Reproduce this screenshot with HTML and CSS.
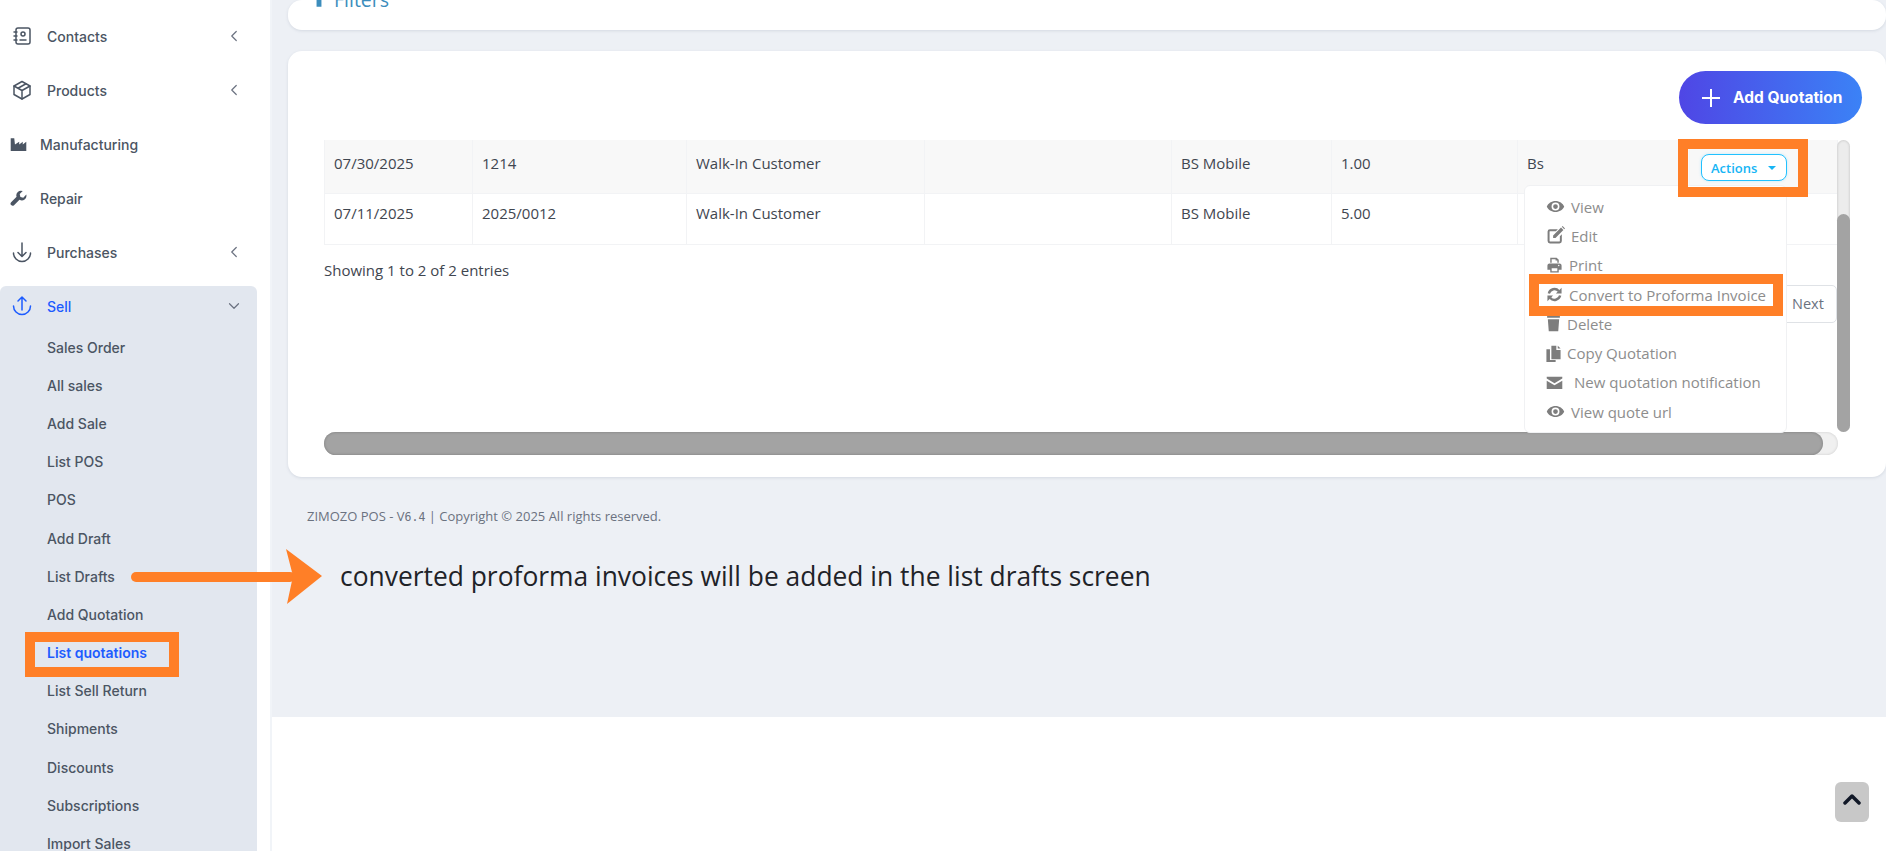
FILE: index.html
```html
<!DOCTYPE html>
<html lang="en">
<head>
<meta charset="utf-8">
<title>List quotations</title>
<link rel="stylesheet" href="styles.css">
</head>
<body>
<div class="app">
  <aside class="sidebar">
    <a class="nav-link">
      <svg class="nav-icon" viewBox="0 0 24 24"><path d="M20 6v12a2 2 0 0 1-2 2H8a2 2 0 0 1-2-2V6a2 2 0 0 1 2-2h10a2 2 0 0 1 2 2z"/><path d="M10 16h6"/><circle cx="13" cy="10" r="2"/><path d="M4 8h3M4 12h3M4 16h3"/></svg>
      <span class="nav-text">Contacts</span>
      <svg class="chev" viewBox="0 0 24 24"><path d="M15 6l-6 6 6 6"/></svg>
    </a>
    <a class="nav-link">
      <svg class="nav-icon" viewBox="0 0 24 24"><path d="M12 3.500l8 4.500v8.500l-8 4.500-8-4.500V8z"/><path d="M12 12.500L20 8M12 12.500V21M12 12.500L4 8M16 5.750l-8 4.500"/></svg>
      <span class="nav-text">Products</span>
      <svg class="chev" viewBox="0 0 24 24"><path d="M15 6l-6 6 6 6"/></svg>
    </a>
    <a class="nav-link nav-link-fa">
      <svg class="fa-icon" viewBox="0 0 24 20"><path d="M1 1h5l1 9 6-4v4l5-4v4l5-4v13H1z"/></svg>
      <span class="nav-text">Manufacturing</span>
    </a>
    <a class="nav-link nav-link-fa">
      <svg class="fa-icon" viewBox="0 0 24 24"><path d="M23 6.500l-4.300 4.300-4-1-1-4L18 1.500a6.500 6.500 0 0 0-8.700 8.100L1.600 17.300a2.900 2.900 0 0 0 4.100 4.100l7.700-7.700A6.500 6.500 0 0 0 23 6.500z"/></svg>
      <span class="nav-text">Repair</span>
    </a>
    <a class="nav-link">
      <svg class="nav-icon" viewBox="0 0 24 24"><path d="M12 3v13M8 12.500l4 4 4-4"/><path d="M3.500 13a8.500 8.500 0 0 0 17 0"/></svg>
      <span class="nav-text">Purchases</span>
      <svg class="chev" viewBox="0 0 24 24"><path d="M15 6l-6 6 6 6"/></svg>
    </a>
    <div class="nav-group">
      <a class="nav-head">
        <svg class="nav-icon" viewBox="0 0 24 24"><path d="M12 16V3M8 7l4-4 4 4"/><path d="M3.500 12a8.500 8.500 0 0 0 17 0"/></svg>
        <span class="nav-text">Sell</span>
        <svg class="chev" viewBox="0 0 24 24"><path d="M6 9l6 6 6-6"/></svg>
      </a>
      <a class="sub-link">Sales Order</a>
      <a class="sub-link">All sales</a>
      <a class="sub-link">Add Sale</a>
      <a class="sub-link">List POS</a>
      <a class="sub-link">POS</a>
      <a class="sub-link">Add Draft</a>
      <a class="sub-link">List Drafts</a>
      <a class="sub-link">Add Quotation</a>
      <a class="sub-link sub-active">List quotations</a>
      <a class="sub-link">List Sell Return</a>
      <a class="sub-link">Shipments</a>
      <a class="sub-link">Discounts</a>
      <a class="sub-link">Subscriptions</a>
      <a class="sub-link">Import Sales</a>
    </div>
  </aside>

  <div class="content-col">
    <main class="main">
      <section class="card filter-card">
        <a class="filter-link">
          <svg class="filter-icon" viewBox="0 0 18 18"><path d="M1 1h16l-6 7v9H7V8z"/></svg>
          <span>Filters</span>
        </a>
      </section>
      <section class="card list-card">
        <div class="card-tools">
          <a class="add-btn">
            <svg class="plus" viewBox="0 0 18 18"><path d="M9 0v18M0 9h18"/></svg>
            <span>Add Quotation</span>
          </a>
        </div>
        <div class="table-shell">
          <div class="table-body">
            <table class="data-table">
              <colgroup>
                <col class="c1"><col class="c2"><col class="c3"><col class="c4"><col class="c5"><col class="c6"><col class="c7"><col class="c8">
              </colgroup>
              <tr class="row-odd">
                <td>07/30/2025</td><td>1214</td><td>Walk-In Customer</td><td></td><td>BS Mobile</td><td>1.00</td><td>Bs</td>
                <td class="action-cell"><button class="actions-btn">Actions<span class="caret"></span></button></td>
              </tr>
              <tr class="row-even">
                <td>07/11/2025</td><td>2025/0012</td><td>Walk-In Customer</td><td></td><td>BS Mobile</td><td>5.00</td><td></td><td></td>
              </tr>
            </table>
            <div class="table-foot">
              <span class="info">Showing 1 to 2 of 2 entries</span>
              <a class="page-next">Next</a>
            </div>
          </div>
          <div class="vscroll"><div class="vthumb"></div></div>
        </div>
        <div class="hscroll"><div class="hthumb"></div></div>

        <ul class="dropdown">
          <li class="dd-item"><svg class="dd-icon i-wide" viewBox="0 0 24 24"><path d="M12 5C7 5 2.700 8 1 12c1.700 4 6 7 11 7s9.300-3 11-7c-1.700-4-6-7-11-7zm0 12a5 5 0 1 1 0-10 5 5 0 0 1 0 10zm0-8a3 3 0 1 0 0 6 3 3 0 0 0 0-6z"/></svg>View</li>
          <li class="dd-item"><svg class="dd-icon i-wide" viewBox="0 0 24 24"><path d="M5 4h10l-2.500 2.500H5a.5.5 0 0 0-.5.5v12a.5.5 0 0 0 .5.5h12a.5.5 0 0 0 .5-.5v-6L20 10.500V19a3 3 0 0 1-3 3H5a3 3 0 0 1-3-3V7a3 3 0 0 1 3-3z"/><path d="M9 12L19 2l3 3-10 10H9zM20 1l1-1 3 3-1 1z"/></svg>Edit</li>
          <li class="dd-item"><svg class="dd-icon i-mid" viewBox="0 0 24 24"><path d="M6 1h9l3 3v4h-2V5h-2.500V3H8v5H6zM5 9h14a3 3 0 0 1 3 3v6h-4v4H6v-4H2v-6a3 3 0 0 1 3-3zm3 7v4h8v-4zm10-5a1 1 0 1 0 0 2 1 1 0 0 0 0-2z"/></svg>Print</li>
          <li class="dd-item"><svg class="dd-icon i-mid" viewBox="0 0 24 24"><path class="arc" d="M4 10.500A8.200 8.200 0 0 1 18 7"/><path d="M22 2.500v8h-8z"/><path class="arc" d="M20 13.500A8.200 8.200 0 0 1 6 17"/><path d="M2 21.500v-8h8z"/></svg>Convert to Proforma Invoice</li>
          <li class="dd-item"><svg class="dd-icon i-thin" viewBox="0 0 20 24"><path d="M1 1h18v3H1zM2 6h16l-1.300 17H3.300z"/></svg>Delete</li>
          <li class="dd-item"><svg class="dd-icon i-thin" viewBox="0 0 20 24"><path d="M0 6h5v15h8v3H0zM7 1h7v6h6v13H7zM16 1l4 4h-4z"/></svg>Copy Quotation</li>
          <li class="dd-item dd-item-wide"><svg class="dd-icon i-mid" viewBox="0 0 24 20"><path d="M1 2h22v2.500L12 11 1 4.500zM1 7.500L12 14l11-6.500V19H1z"/></svg>New quotation notification</li>
          <li class="dd-item"><svg class="dd-icon i-wide" viewBox="0 0 24 24"><path d="M12 5C7 5 2.700 8 1 12c1.700 4 6 7 11 7s9.300-3 11-7c-1.700-4-6-7-11-7zm0 12a5 5 0 1 1 0-10 5 5 0 0 1 0 10zm0-8a3 3 0 1 0 0 6 3 3 0 0 0 0-6z"/></svg>View quote url</li>
        </ul>
      </section>
      <footer class="page-footer">ZIMOZO POS - V<span class="mono">6.4</span> | Copyright © 2025 All rights reserved.</footer>
    </main>
  </div>
</div>

<a class="to-top"><svg viewBox="0 0 18 12"><path d="M2 10l7-7 7 7"/></svg></a>

<div class="mark mark-actions"></div>
<div class="mark mark-convert"></div>
<div class="mark mark-list"></div>
<div class="arrow-line"></div>
<svg class="arrow-head" viewBox="0 0 36 56"><path d="M0 0L36 27 1 55 7 27z"/></svg>
<div class="note">converted proforma invoices will be added in the list drafts screen</div>
</body>
</html>
```

FILE: styles.css
```css
* { box-sizing: border-box; }
html, body { margin: 0; height: 851px; overflow: hidden; background: #fff; }
body { position: relative; font-family: "Open Sans", "Noto Sans", sans-serif; color: #374151; }
a { text-decoration: none; }

.app { display: flex; height: 851px; }

.sidebar {
  width: 270px;
  flex: none;
  padding: 9px 13px 0 0;
  background: #fff;
  font-family: Inter, "Noto Sans", sans-serif;
  font-size: 14px;
  font-weight: 500;
  color: #4b5563;
  overflow: hidden;
}
.nav-link { display: flex; align-items: center; height: 54px; padding-left: 10px; }
.nav-icon { width: 24px; height: 24px; flex: none; margin-right: 13px; fill: none; stroke: #4b5563; stroke-width: 1.500; stroke-linecap: round; stroke-linejoin: round; }
.fa-icon { width: 17px; height: 17px; flex: none; margin-right: 13px; fill: #4b5563; }
.nav-text { flex: 1; }
.chev { width: 18px; height: 18px; flex: none; margin-right: 14px; fill: none; stroke: #6b7280; stroke-width: 1.6; stroke-linecap: round; stroke-linejoin: round; }
.nav-group { margin-top: 7px; height: 700px; background: #e2e7ef; border-radius: 6px 6px 0 0; }
.nav-head { display: flex; align-items: center; height: 40px; margin-bottom: 2px; padding-left: 10px; color: #1d5cff; }
.nav-head .nav-icon { stroke: #1d5cff; }
.sub-link { display: flex; align-items: center; height: 38.2px; padding-left: 47px; }
.sub-active { color: #1d5cff; font-weight: 600; }

.content-col { flex: 1; min-width: 0; border-left: 2px solid #f1f4f8; }
.main { height: 717px; background: #edf0f5; padding-left: 16px; overflow: hidden; display: flex; flex-direction: column; }

.card { background: #fff; border-radius: 14px; box-shadow: 0 1px 3px rgba(100, 116, 139, .18); }
.filter-card { height: 30px; flex: none; padding-left: 20px; display: flex; align-items: flex-end; overflow: hidden; }
.filter-link { display: flex; align-items: center; gap: 4px; height: 26px; margin-bottom: 18px; color: #3c8dbc; font-size: 19.500px; }
.filter-icon { width: 22px; height: 22px; margin-bottom: 4px; fill: #3c8dbc; }

.list-card { position: relative; flex: none; height: 426px; margin-top: 21px; padding: 20px 24px 0 36px; }
.card-tools { display: flex; justify-content: flex-end; height: 53px; }
.add-btn { display: flex; align-items: center; gap: 13px; width: 183px; height: 53px; padding-left: 23px; border-radius: 27px; background: linear-gradient(90deg, #4f46e5, #3b82f6); color: #fff; font-family: Inter, "Noto Sans", sans-serif; font-size: 15.500px; font-weight: 700; white-space: nowrap; }
.plus { width: 18px; height: 18px; flex: none; stroke: #fff; stroke-width: 2; }

.table-shell { display: flex; height: 292px; margin-top: 16px; }
.table-body { width: 1513px; flex: none; }
.data-table { width: 1513px; table-layout: fixed; border-collapse: collapse; font-size: 15px; line-height: 20px; color: #3f4650; }
.c1 { width: 148px; } .c2 { width: 214px; } .c3 { width: 238px; } .c4 { width: 247px; } .c5 { width: 160px; } .c6 { width: 186px; } .c7 { width: 172px; } .c8 { width: 148px; }
.data-table td { padding: 0 9px; border: 1px solid #f2f3f5; border-top: 0; vertical-align: top; }
.row-odd { height: 53px; background: #f8f8f8; }
.row-even { height: 51px; background: #fff; }
.row-odd td { padding-top: 13px; }
.row-even td { padding-top: 9px; }
.data-table .action-cell { padding: 0; }
.actions-btn { display: flex; align-items: center; width: 86px; height: 27px; margin: 14px 0 0 11px; padding: 0 0 0 9px; border: 1px solid #22c1ff; border-radius: 8px; background: #fff; box-shadow: 0 0 3px rgba(34, 193, 255, .25); color: #16b5f5; font-family: "Open Sans", "Noto Sans", sans-serif; font-size: 13px; font-weight: 600; }
.caret { width: 0; height: 0; margin-left: 11px; border: 4px solid transparent; border-top-color: #16b5f5; border-bottom: 0; }

.table-foot { display: flex; justify-content: space-between; font-size: 15px; color: #3f4650; }
.info { margin-top: 15px; }
.page-next { margin-top: 40px; width: 52px; height: 38px; padding-left: 6px; line-height: 36px; border: 1px solid #dfe2e6; border-radius: 0 5px 5px 0; font-size: 14.500px; color: #6b7280; }

.vscroll { width: 13px; height: 292px; background: #ececec; border-radius: 7px; box-shadow: inset 0 0 3px rgba(0,0,0,.2); display: flex; align-items: flex-end; }
.vthumb { width: 13px; height: 218px; background: #a3a3a3; border-radius: 7px; }
.hscroll { width: 1514px; height: 23px; border-radius: 12px; background: #f0f0f0; box-shadow: inset 0 0 3px rgba(0,0,0,.15); }
.hthumb { width: 1499px; height: 23px; background: #a3a3a3; border-radius: 12px; box-shadow: inset 0 0 3px rgba(0,0,0,.25); }

.dropdown { position: absolute; left: 1236px; top: 134px; width: 263px; height: 248px; margin: 0; padding: 6px 0 0 21px; list-style: none; background: #fff; border: 1px solid #f0f1f3; border-radius: 6px; font-size: 15px; color: #8d8d8d; }
.dd-item { display: flex; align-items: center; height: 29.300px; white-space: nowrap; }
.dd-icon { flex: none; fill: #7d7d7d; }
.i-wide { width: 19px; height: 19px; margin-right: 6px; }
.i-mid { width: 17px; height: 17px; margin-right: 6px; }
.i-thin { width: 15px; height: 17px; margin-right: 6px; }
.dd-item-wide .dd-icon { margin-right: 11px; }
.arc { fill: none; stroke: #7d7d7d; stroke-width: 3.400; }

.page-footer { margin: 31px 0 0 19px; font-size: 13px; line-height: 16px; color: #6b7280; }
.mono { font-family: "DejaVu Sans Mono", monospace; font-size: 11.500px; }

.to-top { position: absolute; left: 1835px; top: 782px; width: 34px; height: 40px; display: flex; align-items: center; justify-content: center; background: #c8c8c8; border-radius: 6px; }
.to-top svg { width: 18px; height: 12px; margin-bottom: 7px; fill: none; stroke: #111827; stroke-width: 3.500; stroke-linecap: round; stroke-linejoin: round; }

.mark { position: absolute; border: 10px solid #ff7f27; }
.mark-actions { left: 1678px; top: 139px; width: 130px; height: 58px; }
.mark-convert { left: 1529px; top: 274px; width: 254px; height: 42px; }
.mark-list { left: 25px; top: 632px; width: 154px; height: 45px; }
.arrow-line { position: absolute; left: 131px; top: 572px; width: 164px; height: 10px; border-radius: 5px; background: #ff7f27; }
.arrow-head { position: absolute; left: 286px; top: 549px; width: 36px; height: 56px; fill: #ff7f27; }
.note { position: absolute; left: 340px; top: 557px; font-family: "Open Sans", "Noto Sans", sans-serif; font-size: 26.400px; line-height: 38px; color: #1f2328; white-space: nowrap; }
```
